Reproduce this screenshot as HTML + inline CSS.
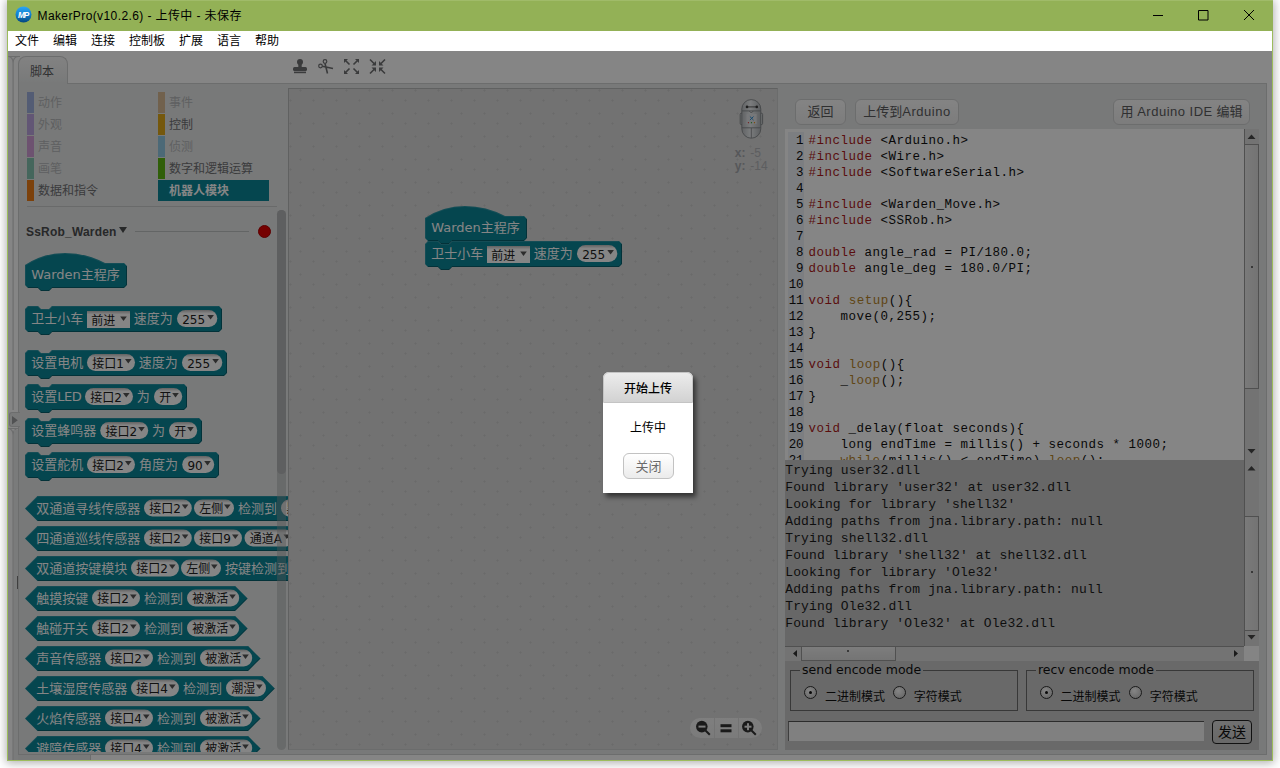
<!DOCTYPE html>
<html lang="zh-CN"><head><meta charset="utf-8"><title>MakerPro</title>
<style>
*{box-sizing:border-box;margin:0;padding:0}
html,body{width:1280px;height:768px;overflow:hidden;background:#fff}
body{position:relative;font-family:"Liberation Sans","Noto Sans CJK SC",sans-serif;font-size:12px;color:#000}
.a{position:absolute}
#win{left:7px;top:0;width:1266px;height:761px;background:#9cbc5c;box-shadow:0 1px 9px 1px rgba(0,0,0,.32)}
#tb{left:0;top:0;width:1266px;height:31px;background:#93b156;box-shadow:inset 0 1px 0 #a0bb69}
#title{left:30.5px;top:8px;font-size:12px;line-height:16px;white-space:nowrap;color:#000;letter-spacing:.4px}
#menu{left:1px;top:31px;width:1264px;height:20px;background:#fff}
#menu span{position:absolute;top:2px;line-height:16px;font-size:12px;white-space:nowrap}
#app{left:1px;top:51px;width:1264px;height:709px;background:#fff;overflow:hidden}
#dim{left:1px;top:51px;width:1264px;height:709px;background:rgba(0,0,0,.48)}
#panel{left:10px;top:32px;width:1249px;height:672px;background:#e6e8e8;border:1px solid #d0d1d2}
#tab{left:10px;top:5px;width:50px;height:28px;background:linear-gradient(#f9f9f9,#e6e8e8);border:1px solid #d0d1d2;border-bottom:0;border-radius:8px 8px 0 0;font-size:12px;line-height:16px;padding:6.500px 0 0 11px;color:#5c5d5f}
.cat{position:absolute;height:21px;font-size:12px;line-height:21px;white-space:nowrap}
.cat i{position:absolute;left:0;top:0;width:7px;height:21px}
.cat b{position:absolute;left:11px;top:1.100px;font-weight:400}
.dis{opacity:.42}
svg text{font-family:"Liberation Sans","Noto Sans CJK SC",sans-serif}
.bk{fill:#0a8698}
.hi{fill:none;stroke:rgba(255,255,255,.13);stroke-width:1}
.lo{fill:none;stroke:rgba(0,0,0,.28);stroke-width:1}
.bl{fill:#fff;font-size:13px;font-weight:400}
.la{font-family:"DejaVu Sans",sans-serif;font-weight:400}
.pl{fill:url(#pg)}
.pt{fill:#222;font-size:12px;font-weight:400}
.pt .la{font-size:12px}
.ar{fill:#555}
.btn{position:absolute;height:26px;border:1px solid #d0d1d2;border-radius:6px;background:linear-gradient(#fdfdfd,#eeeeee);font-size:13px;line-height:24px;text-align:center;color:#5c5d5f;white-space:nowrap}
pre{font-family:"Liberation Mono",monospace}
#code{left:777px;top:78px;width:459px;height:331px;background:#fff;overflow:hidden}
#gut{left:3px;top:3px;width:16px;height:330px;background:#eef1f8}
#ln{left:0;top:3.5px;width:18.2px;text-align:right;font-size:12.5px;line-height:16px;letter-spacing:-.3px;color:#111}
#src{left:23.6px;top:3.5px;font-size:12.5px;letter-spacing:.499px;line-height:16px;color:#111}
.k{color:#ac1a1a}.f{color:#b8862a}
#con{left:777px;top:409px;width:459px;height:186px;background:#c6c6c6;overflow:hidden}
#con pre{position:absolute;left:.2px;top:2.4px;font-size:13px;letter-spacing:.14px;line-height:17px;color:#1c1c1c}
.sb{position:absolute;background:#dcdcdc}
.th{position:absolute;background:linear-gradient(90deg,#ebebeb,#dddddd);border:1px solid #999}
fieldset{position:absolute;border:1px solid #6c6c6c;height:41px}
legend{position:absolute;top:-8.600px;left:9px;background:#cacaca;padding:0 2px;font-family:"DejaVu Sans",sans-serif;font-size:12.5px;line-height:16px;white-space:nowrap;color:#111}
.rd{position:absolute;width:13px;height:13px;border-radius:50%;border:1px solid #333;background:radial-gradient(circle at 40% 35%,#fff,#bbb)}
.rd.on:after{content:"";position:absolute;left:4px;top:4px;width:3px;height:3px;border-radius:50%;background:#111}
.rl{position:absolute;font-size:12px;line-height:14px;white-space:nowrap;color:#111}
</style></head>
<body>
<div id="win" class="a">
<div id="tb" class="a"><svg class="a" style="left:8px;top:6px" width="17" height="17" viewBox="0 0 17 17"><defs><linearGradient id="lg" x1="0" y1="0" x2="0" y2="1"><stop offset="0" stop-color="#2aa6f6"/><stop offset=".5" stop-color="#1281d0"/><stop offset="1" stop-color="#04467e"/></linearGradient></defs><circle cx="8.5" cy="8.5" r="8" fill="url(#lg)"/><text x="8.2" y="11.500" text-anchor="middle" font-size="8.2" font-weight="700" font-style="italic" fill="#fff" style="letter-spacing:-1px">MP</text></svg><div id="title" class="a">MakerPro(v10.2.6) - 上传中 - 未保存</div><svg class="a" style="left:1139px;top:5px" width="120" height="22" viewBox="0 0 120 22"><path d="M7 10.500h10M52.500 5.500h9.500v9.500h-9.500zM98 5l10 10M108 5L98 15" fill="none" stroke="#000" stroke-width="1"/></svg></div>
<div id="menu" class="a"><span style="left:7px">文件</span><span style="left:45px">编辑</span><span style="left:83px">连接</span><span style="left:121px">控制板</span><span style="left:171px">扩展</span><span style="left:209px">语言</span><span style="left:247px">帮助</span></div>
<div id="app" class="a">
<svg class="a" style="left:0;top:0" width="16" height="709" viewBox="0 0 16 709"><g fill="none" stroke="#d0d1d2" stroke-width="1.2"><path d="M.3 5.500H12M.4 5.500Q5 6 5.100 12V359M10 5.500Q5.200 6 5.100 12"/><path d="M.3 377.500H10M.4 377.500Q5 378 5.100 384V709M10 377.500Q5.200 378 5.100 384"/></g></svg><div id="panel" class="a"></div><div class="a" style="left:6px;top:704px;width:77px;height:5px;background:#e6e8e8;border-right:1px solid #d0d1d2"></div><div class="a" style="left:6px;top:379px;width:4px;height:330px;background:#eaecec"></div><div class="a" style="left:9px;top:525px;width:1px;height:13px;background:#7a7a7a"></div><div id="tab" class="a">脚本</div><div class="a" style="left:1px;top:361px;width:11px;height:15px;border:1px solid #d0d1d2;border-right:0;border-radius:3px 0 0 3px;background:#e6e8e8"></div><svg class="a" style="left:4px;top:364.800px" width="6" height="9"><path d="M0 0l5.800 4.200l-5.800 4.200z" fill="#9c9d9f"/></svg><svg class="a" style="left:284px;top:7px" width="96" height="17" viewBox="0 0 96 17"><g fill="#707173"><circle cx="8" cy="4" r="3"/><rect x="6.3" y="4" width="3.4" height="6"/><rect x="1" y="9" width="14" height="4" rx="1.5"/><rect x="2" y="13.6" width="12" height="1.6"/></g><g fill="none" stroke="#707173" stroke-width="1.2"><circle cx="33" cy="3.5" r="1.8"/><circle cx="28.5" cy="8" r="1.8"/><path d="M33 5.5L35.5 15.5M30.3 8.2L41 10.5" stroke-width="1.6"/></g><g stroke="#707173" stroke-width="1.6" fill="#707173"><path d="M53 2l4.5 4.5M66 2l-4.5 4.5M53 15l4.5-4.5M66 15l-4.5-4.5" fill="none"/><path d="M52 1h4l-4 4zM67 1h-4l4 4zM52 16h4l-4-4zM67 16h-4l4-4z" stroke="none"/></g><g stroke="#707173" stroke-width="1.6" fill="#707173"><path d="M78 1.5l4.5 4.5M93 1.5l-4.5 4.5M78 15.5l4.5-4.5M93 15.5l-4.5-4.5" fill="none"/><path d="M84 7.500h-4.500l4.500-4.500zM87 7.500h4.500l-4.500-4.500zM84 9.500h-4.500l4.500 4.500zM87 9.500h4.500l-4.500 4.500z" stroke="none"/></g></svg><div class="cat" style="left:19px;top:41px"><i style="background:#4a6cd4;opacity:.45"></i><b style="color:#b6b8ba">动作</b></div><div class="cat" style="left:19px;top:63px"><i style="background:#8a55d7;opacity:.45"></i><b style="color:#b6b8ba">外观</b></div><div class="cat" style="left:19px;top:85px"><i style="background:#bb42c3;opacity:.45"></i><b style="color:#b6b8ba">声音</b></div><div class="cat" style="left:19px;top:107px"><i style="background:#0e9a6c;opacity:.45"></i><b style="color:#b6b8ba">画笔</b></div><div class="cat" style="left:19px;top:129px"><i style="background:#ee7d16"></i><b style="color:#707174">数据和指令</b></div><div class="cat" style="left:150px;top:41px"><i style="background:#c88330;opacity:.45"></i><b style="color:#b6b8ba">事件</b></div><div class="cat" style="left:150px;top:63px"><i style="background:#e1a91a"></i><b style="color:#707174">控制</b></div><div class="cat" style="left:150px;top:85px"><i style="background:#2ca5e2;opacity:.45"></i><b style="color:#b6b8ba">侦测</b></div><div class="cat" style="left:150px;top:107px"><i style="background:#5cb712"></i><b style="color:#707174">数字和逻辑运算</b></div><div class="cat" style="left:150px;top:129px;width:111px;background:#0a8698"><b style="color:#fff;font-weight:700">机器人模块</b></div><div class="a" style="left:19px;top:155px;width:250px;height:1px;background:#c9cbcb"></div><div class="a" style="left:18px;top:172px;font-size:12px;letter-spacing:.2px;font-weight:700;line-height:18px;color:#4c4d4f;white-space:nowrap">SsRob_Warden</div><svg class="a" style="left:111px;top:176px" width="8" height="6"><path d="M0 0h8l-4 6z" fill="#4c4d4f"/></svg><div class="a" style="left:127px;top:180px;width:114px;height:1px;background:#bfc1c1"></div><div class="a" style="left:250px;top:173.5px;width:13px;height:13px;border-radius:50%;background:#e00000;border:1px solid #b00000"></div><svg class="a" style="left:10px;top:158px" width="270" height="543" viewBox="18 209 270 543"><defs><linearGradient id="pg" x1="0" y1="0" x2="0" y2="1"><stop offset="0" stop-color="#bdbdbd"/><stop offset=".2" stop-color="#fff"/></linearGradient></defs><g transform="translate(25 253)"><path class="bk" d="M0 12Q18.2 0 40 0Q61.2 0.2 80 10L99 10L102 13L102 32L99 35L27 35L24 38L16 38L13 35L3 35L0 32Z"/><path class="hi" d="M.5 32L.5 12.3Q18.300 .5 40 .5Q61 .7 79.800 10.500L98.8 10.500"/><path class="lo" d="M101.5 13.200L101.5 31.8L98.8 34.5L27.2 34.5L24.2 37.5L15.8 37.5L12.8 34.5L3.2 34.5"/><text class="bl" x="6.2" y="26.4"><tspan class="la">Warden</tspan>主程序</text></g><g transform="translate(25 306)"><path class="bk" d="M0 3L3 0L13 0L16 3L24 3L27 0L194 0L197 3L197 23L194 26L27 26L24 29L16 29L13 26L3 26L0 23Z"/><path class="hi" d="M.5 23L.5 3.2L3.2 .5L12.8 .5L15.8 3.5L24.2 3.5L27.2 .5L193.8 .5"/><path class="lo" d="M196.5 3.2L196.5 22.8L193.8 25.5L27.2 25.5L24.2 28.5L15.8 28.5L12.8 25.5L3.2 25.5"/><text class="bl" x="6.2" y="17.1">卫士小车</text><rect class="pl" x="62" y="5" width="43" height="17"/><text class="pt" x="66.2" y="18.9">前进</text><path class="ar" d="M95.19999999999999 10.6h6.6l-3.3 4.4z"/><text class="bl" x="108.8" y="17.1">速度为</text><rect class="pl" x="152" y="4" width="40.3" height="17" rx="8.5"/><text class="pt" x="157.2" y="17.9"><tspan class="la">255</tspan></text><path class="ar" d="M182.3 9h6.6l-3.3 4.4z"/></g><g transform="translate(25 350)"><path class="bk" d="M0 3L3 0L13 0L16 3L24 3L27 0L199 0L202 3L202 23L199 26L27 26L24 29L16 29L13 26L3 26L0 23Z"/><path class="hi" d="M.5 23L.5 3.2L3.2 .5L12.8 .5L15.8 3.5L24.2 3.5L27.2 .5L198.8 .5"/><path class="lo" d="M201.5 3.2L201.5 22.8L198.8 25.5L27.2 25.5L24.2 28.5L15.8 28.5L12.8 25.5L3.2 25.5"/><text class="bl" x="6.2" y="17.1">设置电机</text><rect class="pl" x="62" y="4" width="48" height="17" rx="8.5"/><text class="pt" x="67.2" y="17.9">接口<tspan class="la">1</tspan></text><path class="ar" d="M100.0 9h6.6l-3.3 4.4z"/><text class="bl" x="113.8" y="17.1">速度为</text><rect class="pl" x="157" y="4" width="40.3" height="17" rx="8.5"/><text class="pt" x="162.2" y="17.9"><tspan class="la">255</tspan></text><path class="ar" d="M187.3 9h6.6l-3.3 4.4z"/></g><g transform="translate(25 384)"><path class="bk" d="M0 3L3 0L13 0L16 3L24 3L27 0L159 0L162 3L162 23L159 26L27 26L24 29L16 29L13 26L3 26L0 23Z"/><path class="hi" d="M.5 23L.5 3.2L3.2 .5L12.8 .5L15.8 3.5L24.2 3.5L27.2 .5L158.8 .5"/><path class="lo" d="M161.5 3.2L161.5 22.8L158.8 25.5L27.2 25.5L24.2 28.5L15.8 28.5L12.8 25.5L3.2 25.5"/><text class="bl" x="6.2" y="17.1">设置<tspan class="la" style="letter-spacing:-.5px">LED</tspan></text><rect class="pl" x="60" y="4" width="48" height="17" rx="8.5"/><text class="pt" x="65.2" y="17.9">接口<tspan class="la">2</tspan></text><path class="ar" d="M98.0 9h6.6l-3.3 4.4z"/><text class="bl" x="111.8" y="17.1">为</text><rect class="pl" x="129" y="4" width="28.2" height="17" rx="8.5"/><text class="pt" x="134.2" y="17.9">开</text><path class="ar" d="M147.2 9h6.6l-3.3 4.4z"/></g><g transform="translate(25 418)"><path class="bk" d="M0 3L3 0L13 0L16 3L24 3L27 0L174 0L177 3L177 23L174 26L27 26L24 29L16 29L13 26L3 26L0 23Z"/><path class="hi" d="M.5 23L.5 3.2L3.2 .5L12.8 .5L15.8 3.5L24.2 3.5L27.2 .5L173.8 .5"/><path class="lo" d="M176.5 3.2L176.5 22.8L173.8 25.5L27.2 25.5L24.2 28.5L15.8 28.5L12.8 25.5L3.2 25.5"/><text class="bl" x="6.2" y="17.1">设置蜂鸣器</text><rect class="pl" x="75.2" y="4" width="48" height="17" rx="8.5"/><text class="pt" x="80.4" y="17.9">接口<tspan class="la">2</tspan></text><path class="ar" d="M113.2 9h6.6l-3.3 4.4z"/><text class="bl" x="127.0" y="17.1">为</text><rect class="pl" x="144" y="4" width="28.2" height="17" rx="8.5"/><text class="pt" x="149.2" y="17.9">开</text><path class="ar" d="M162.2 9h6.6l-3.3 4.4z"/></g><g transform="translate(25 452)"><path class="bk" d="M0 3L3 0L13 0L16 3L24 3L27 0L191 0L194 3L194 23L191 26L27 26L24 29L16 29L13 26L3 26L0 23Z"/><path class="hi" d="M.5 23L.5 3.2L3.2 .5L12.8 .5L15.8 3.5L24.2 3.5L27.2 .5L190.8 .5"/><path class="lo" d="M193.5 3.2L193.5 22.8L190.8 25.5L27.2 25.5L24.2 28.5L15.8 28.5L12.8 25.5L3.2 25.5"/><text class="bl" x="6.2" y="17.1">设置舵机</text><rect class="pl" x="62" y="4" width="48" height="17" rx="8.5"/><text class="pt" x="67.2" y="17.9">接口<tspan class="la">2</tspan></text><path class="ar" d="M100.0 9h6.6l-3.3 4.4z"/><text class="bl" x="114.0" y="17.1">角度为</text><rect class="pl" x="157.2" y="4" width="32" height="17" rx="8.5"/><text class="pt" x="162.39999999999998" y="17.9"><tspan class="la">90</tspan></text><path class="ar" d="M179.2 9h6.6l-3.3 4.4z"/></g><g transform="translate(25 496)"><path class="bk" d="M12.5 25L0 12.5L12.5 0L327.5 0L340 12.5L327.5 25Z"/><path class="hi" d="M.7 12.5L12.7 .5L327.3 .5"/><path class="lo" d="M339.3 12.5L327.3 24.5L12.7 24.5"/><text class="bl" x="11.2" y="16.6">双通道寻线传感器</text><rect class="pl" x="119" y="3.5" width="47.8" height="17" rx="8.5"/><text class="pt" x="124.2" y="17.4">接口<tspan class="la">2</tspan></text><path class="ar" d="M156.8 8.5h6.6l-3.3 4.4z"/><rect class="pl" x="169" y="3.5" width="40" height="17" rx="8.5"/><text class="pt" x="174.2" y="17.4">左侧</text><path class="ar" d="M199.0 8.5h6.6l-3.3 4.4z"/><text class="bl" x="213.0" y="16.6">检测到</text><rect class="pl" x="256" y="3.5" width="40" height="17" rx="8.5"/><text class="pt" x="261.2" y="17.4">黑色</text><path class="ar" d="M286.0 8.5h6.6l-3.3 4.4z"/></g><g transform="translate(25 526)"><path class="bk" d="M12.5 25L0 12.5L12.5 0L387.5 0L400 12.5L387.5 25Z"/><path class="hi" d="M.7 12.5L12.7 .5L387.3 .5"/><path class="lo" d="M399.3 12.5L387.3 24.5L12.7 24.5"/><text class="bl" x="11.2" y="16.6">四通道巡线传感器</text><rect class="pl" x="119" y="3.5" width="47.8" height="17" rx="8.5"/><text class="pt" x="124.2" y="17.4">接口<tspan class="la">2</tspan></text><path class="ar" d="M156.8 8.5h6.6l-3.3 4.4z"/><rect class="pl" x="169" y="3.5" width="48" height="17" rx="8.5"/><text class="pt" x="174.2" y="17.4">接口<tspan class="la">9</tspan></text><path class="ar" d="M207.0 8.5h6.6l-3.3 4.4z"/><rect class="pl" x="219.5" y="3.5" width="49" height="17" rx="8.5"/><text class="pt" x="224.7" y="17.4">通道<tspan class="la">A</tspan></text><path class="ar" d="M258.5 8.5h6.6l-3.3 4.4z"/></g><g transform="translate(25 556)"><path class="bk" d="M12.5 25L0 12.5L12.5 0L327.5 0L340 12.5L327.5 25Z"/><path class="hi" d="M.7 12.5L12.7 .5L327.3 .5"/><path class="lo" d="M339.3 12.5L327.3 24.5L12.7 24.5"/><text class="bl" x="11.2" y="16.6">双通道按键模块</text><rect class="pl" x="106" y="3.5" width="48" height="17" rx="8.5"/><text class="pt" x="111.2" y="17.4">接口<tspan class="la">2</tspan></text><path class="ar" d="M144.0 8.5h6.6l-3.3 4.4z"/><rect class="pl" x="156" y="3.5" width="40" height="17" rx="8.5"/><text class="pt" x="161.2" y="17.4">左侧</text><path class="ar" d="M186.0 8.5h6.6l-3.3 4.4z"/><text class="bl" x="200.0" y="16.6">按键检测到</text></g><g transform="translate(25 586)"><path class="bk" d="M12.5 25L0 12.5L12.5 0L210.1 0L222.6 12.5L210.1 25Z"/><path class="hi" d="M.7 12.5L12.7 .5L209.9 .5"/><path class="lo" d="M221.9 12.5L209.9 24.5L12.7 24.5"/><text class="bl" x="11.2" y="16.6">触摸按键</text><rect class="pl" x="67" y="3.5" width="48" height="17" rx="8.5"/><text class="pt" x="72.2" y="17.4">接口<tspan class="la">2</tspan></text><path class="ar" d="M105.0 8.5h6.6l-3.3 4.4z"/><text class="bl" x="119.0" y="16.6">检测到</text><rect class="pl" x="162" y="3.5" width="52.2" height="17" rx="8.5"/><text class="pt" x="167.2" y="17.4">被激活</text><path class="ar" d="M204.2 8.5h6.6l-3.3 4.4z"/></g><g transform="translate(25 616)"><path class="bk" d="M12.5 25L0 12.5L12.5 0L210.1 0L222.6 12.5L210.1 25Z"/><path class="hi" d="M.7 12.5L12.7 .5L209.9 .5"/><path class="lo" d="M221.9 12.5L209.9 24.5L12.7 24.5"/><text class="bl" x="11.2" y="16.6">触碰开关</text><rect class="pl" x="67" y="3.5" width="48" height="17" rx="8.5"/><text class="pt" x="72.2" y="17.4">接口<tspan class="la">2</tspan></text><path class="ar" d="M105.0 8.5h6.6l-3.3 4.4z"/><text class="bl" x="119.0" y="16.6">检测到</text><rect class="pl" x="162" y="3.5" width="52.2" height="17" rx="8.5"/><text class="pt" x="167.2" y="17.4">被激活</text><path class="ar" d="M204.2 8.5h6.6l-3.3 4.4z"/></g><g transform="translate(25 646)"><path class="bk" d="M12.5 25L0 12.5L12.5 0L223.1 0L235.6 12.5L223.1 25Z"/><path class="hi" d="M.7 12.5L12.7 .5L222.9 .5"/><path class="lo" d="M234.9 12.5L222.9 24.5L12.7 24.5"/><text class="bl" x="11.2" y="16.6">声音传感器</text><rect class="pl" x="80" y="3.5" width="48" height="17" rx="8.5"/><text class="pt" x="85.2" y="17.4">接口<tspan class="la">2</tspan></text><path class="ar" d="M118.0 8.5h6.6l-3.3 4.4z"/><text class="bl" x="132.0" y="16.6">检测到</text><rect class="pl" x="175" y="3.5" width="52.2" height="17" rx="8.5"/><text class="pt" x="180.2" y="17.4">被激活</text><path class="ar" d="M217.2 8.5h6.6l-3.3 4.4z"/></g><g transform="translate(25 676)"><path class="bk" d="M12.5 25L0 12.5L12.5 0L237.3 0L249.8 12.5L237.3 25Z"/><path class="hi" d="M.7 12.5L12.7 .5L237.10000000000002 .5"/><path class="lo" d="M249.10000000000002 12.5L237.10000000000002 24.5L12.7 24.5"/><text class="bl" x="11.2" y="16.6">土壤湿度传感器</text><rect class="pl" x="106" y="3.5" width="48" height="17" rx="8.5"/><text class="pt" x="111.2" y="17.4">接口<tspan class="la">4</tspan></text><path class="ar" d="M144.0 8.5h6.6l-3.3 4.4z"/><text class="bl" x="158.0" y="16.6">检测到</text><rect class="pl" x="201" y="3.5" width="40" height="17" rx="8.5"/><text class="pt" x="206.2" y="17.4">潮湿</text><path class="ar" d="M231.0 8.5h6.6l-3.3 4.4z"/></g><g transform="translate(25 706)"><path class="bk" d="M12.5 25L0 12.5L12.5 0L223.1 0L235.6 12.5L223.1 25Z"/><path class="hi" d="M.7 12.5L12.7 .5L222.9 .5"/><path class="lo" d="M234.9 12.5L222.9 24.5L12.7 24.5"/><text class="bl" x="11.2" y="16.6">火焰传感器</text><rect class="pl" x="80" y="3.5" width="48" height="17" rx="8.5"/><text class="pt" x="85.2" y="17.4">接口<tspan class="la">4</tspan></text><path class="ar" d="M118.0 8.5h6.6l-3.3 4.4z"/><text class="bl" x="132.0" y="16.6">检测到</text><rect class="pl" x="175" y="3.5" width="52.2" height="17" rx="8.5"/><text class="pt" x="180.2" y="17.4">被激活</text><path class="ar" d="M217.2 8.5h6.6l-3.3 4.4z"/></g><g transform="translate(25 736)"><path class="bk" d="M12.5 25L0 12.5L12.5 0L223.1 0L235.6 12.5L223.1 25Z"/><path class="hi" d="M.7 12.5L12.7 .5L222.9 .5"/><path class="lo" d="M234.9 12.5L222.9 24.5L12.7 24.5"/><text class="bl" x="11.2" y="16.6">避障传感器</text><rect class="pl" x="80" y="3.5" width="48" height="17" rx="8.5"/><text class="pt" x="85.2" y="17.4">接口<tspan class="la">4</tspan></text><path class="ar" d="M118.0 8.5h6.6l-3.3 4.4z"/><text class="bl" x="132.0" y="16.6">检测到</text><rect class="pl" x="175" y="3.5" width="52.2" height="17" rx="8.5"/><text class="pt" x="180.2" y="17.4">被激活</text><path class="ar" d="M217.2 8.5h6.6l-3.3 4.4z"/></g></svg>
<div class="a" style="left:269px;top:159px;width:9px;height:540px;border-radius:5px;background:rgba(160,163,163,.42)"></div><div class="a" style="left:269px;top:159px;width:9px;height:264px;border-radius:5px;background:#b4b6b8"></div><div class="a" id="cv" style="left:280px;top:37px;width:490px;height:662px;background:#dadada;border:1px solid #cdcfcf;border-top-color:#b9bbbb;border-left-color:#b9bbbb;overflow:hidden"><svg class="a" style="left:-1px;top:-1px" width="490" height="662"><defs><pattern id="dt" width="23" height="23" patternUnits="userSpaceOnUse"><path d="M12 1h1v1h1v1h-1v1h-1v-1h-1v-1h1zM2 11h1v1h1v1h-1v1h-1v-1h-1v-1h1z" fill="#000" fill-opacity=".035"/><path d="M12 2h1v1h-1zM2 12h1v1h-1z" fill="#000" fill-opacity=".03"/></pattern></defs><rect width="490" height="662" fill="url(#dt)"/><g transform="translate(137 118)"><path class="bk" d="M0 12Q18.2 0 40 0Q61.2 0.2 80 10L99 10L102 13L102 32L99 35L27 35L24 38L16 38L13 35L3 35L0 32Z"/><path class="hi" d="M.5 32L.5 12.3Q18.300 .5 40 .5Q61 .7 79.800 10.500L98.8 10.500"/><path class="lo" d="M101.5 13.200L101.5 31.8L98.8 34.5L27.2 34.5L24.2 37.5L15.8 37.5L12.8 34.5L3.2 34.5"/><text class="bl" x="6.2" y="26.4"><tspan class="la">Warden</tspan>主程序</text></g><g transform="translate(137 153)"><path class="bk" d="M0 3L3 0L13 0L16 3L24 3L27 0L194 0L197 3L197 23L194 26L27 26L24 29L16 29L13 26L3 26L0 23Z"/><path class="hi" d="M.5 23L.5 3.2L3.2 .5L12.8 .5L15.8 3.5L24.2 3.5L27.2 .5L193.8 .5"/><path class="lo" d="M196.5 3.2L196.5 22.8L193.8 25.5L27.2 25.5L24.2 28.5L15.8 28.5L12.8 25.5L3.2 25.5"/><text class="bl" x="6.2" y="17.1">卫士小车</text><rect class="pl" x="62" y="5" width="43" height="17"/><text class="pt" x="66.2" y="18.9">前进</text><path class="ar" d="M95.19999999999999 10.6h6.6l-3.3 4.4z"/><text class="bl" x="108.8" y="17.1">速度为</text><rect class="pl" x="152" y="4" width="40.3" height="17" rx="8.5"/><text class="pt" x="157.2" y="17.9"><tspan class="la">255</tspan></text><path class="ar" d="M182.3 9h6.6l-3.3 4.4z"/></g></svg><svg class="a" style="left:450px;top:9.5px" width="26" height="40" viewBox="0 0 26 40"><defs><linearGradient id="rb" x1="0" y1="0" x2="1" y2="0"><stop offset="0" stop-color="#b9bdc1"/><stop offset=".45" stop-color="#eceff1"/><stop offset="1" stop-color="#b2b6ba"/></linearGradient></defs><rect x="1.2" y="14.2" width="2.4" height="11.4" rx="1.2" fill="#d8dcdf" stroke="#74787c" stroke-width=".8"/><rect x="21.2" y="14.2" width="2.4" height="11.4" rx="1.2" fill="#d8dcdf" stroke="#74787c" stroke-width=".8"/><rect x="2.8" y=".6" width="19" height="38.6" rx="9.5" fill="url(#rb)" stroke="#7c8084" stroke-width=".8"/><path d="M3 11.900h18.600M3 28.800h18.600M12.300 29v10M10.300 12l2 2l2-2" stroke="#7c8084" stroke-width=".8" fill="none"/><path d="M8 7.900h9.800" stroke="#3a3a3a" stroke-width=".8"/><circle cx="8" cy="7.900" r="1.300" fill="#3a3a3a"/><circle cx="17.800" cy="7.900" r="1.300" fill="#3a3a3a"/><rect x="7.600" y="15" width="10" height="10" fill="#e4e7ea"/><path d="M10.900 17.500l3.600 3.600M14.500 17.500l-3.600 3.600" stroke="#2f8fd6" stroke-width="1"/><circle cx="9.400" cy="23.700" r=".65" fill="#d33"/><circle cx="12.500" cy="23.700" r=".65" fill="#3a3"/><circle cx="15.500" cy="23.700" r=".65" fill="#e80"/></svg><div class="a" style="left:445.800px;top:58px;font-size:12px;line-height:13px;color:#b2b4b8;white-space:nowrap;word-spacing:1.5px"><b style="color:#a6a8ad">x:</b> -5<br><b style="color:#a6a8ad">y:</b> -14</div><div class="a" style="left:401px;top:629px;width:72px;height:20px;border-radius:10px;background:linear-gradient(#f3f3f3,#ebebeb)"></div><div class="a" style="left:425px;top:629px;width:1px;height:20px;background:#dcdcdc"></div><div class="a" style="left:449px;top:629px;width:1px;height:20px;background:#dcdcdc"></div><svg class="a" style="left:401px;top:629px" width="72" height="20" viewBox="0 0 72 20"><g fill="#333" stroke="#333"><circle cx="11.800" cy="8.600" r="5.800" stroke="none"/><path d="M15.500 12.500l4.300 4.200" stroke-width="2"/><rect x="8.500" y="7.600" width="7" height="2" fill="#efefef" stroke="none"/><rect x="30.500" y="6.200" width="11" height="3" stroke="none"/><rect x="30.500" y="11.300" width="11" height="3" stroke="none"/><circle cx="57.800" cy="8.600" r="5.800" stroke="none"/><path d="M61.500 12.500l4.300 4.200" stroke-width="2"/><rect x="54.500" y="7.700" width="7" height="2" fill="#efefef" stroke="none"/><rect x="57" y="5.200" width="2" height="7" fill="#efefef" stroke="none"/></g></svg></div>
<div class="btn" style="left:787px;top:48px;width:51px">返回</div><div class="btn" style="left:847px;top:48px;width:104px">上传到<span style="letter-spacing:.55px">Arduino</span></div><div class="btn" style="left:1105px;top:48px;width:137px">用 <span style="letter-spacing:.5px">Arduino IDE</span> 编辑</div><div id="code" class="a"><div id="gut" class="a"></div><pre id="ln" class="a">1
2
3
4
5
6
7
8
9
10
11
12
13
14
15
16
17
18
19
20
21</pre><pre id="src" class="a"><span class="k">#include</span> &lt;Arduino.h&gt;
<span class="k">#include</span> &lt;Wire.h&gt;
<span class="k">#include</span> &lt;SoftwareSerial.h&gt;

<span class="k">#include</span> &lt;Warden_Move.h&gt;
<span class="k">#include</span> &lt;SSRob.h&gt;

<span class="k">double</span> angle_rad = PI/180.0;
<span class="k">double</span> angle_deg = 180.0/PI;

<span class="k">void</span> <span class="f">setup</span>(){
    move(0,255);
}

<span class="k">void</span> <span class="f">loop</span>(){
    _<span class="f">loop</span>();
}

<span class="k">void</span> _delay(float seconds){
    long endTime = millis() + seconds * 1000;
    <span class="f">while</span>(millis() &lt; endTime)_<span class="f">loop</span>();</pre></div>
<div class="sb" style="left:1236px;top:78px;width:15px;height:331px;border-left:1px solid #999"></div><div class="th" style="left:1236px;top:93px;width:15px;height:245px"></div><svg class="a" style="left:1236px;top:78px" width="15" height="331"><path d="M3.500 10h8l-4-4.500zM3.500 320h8l-4 4.500z" fill="#484848"/><circle cx="8" cy="138" r="1" fill="#444"/></svg><div id="con" class="a"><pre>Trying user32.dll
Found library 'user32' at user32.dll
Looking for library 'shell32'
Adding paths from jna.library.path: null
Trying shell32.dll
Found library 'shell32' at shell32.dll
Looking for library 'Ole32'
Adding paths from jna.library.path: null
Trying Ole32.dll
Found library 'Ole32' at Ole32.dll</pre></div>
<div class="sb" style="left:1236px;top:409px;width:15px;height:186px;border-left:1px solid #999"></div><div class="th" style="left:1236px;top:465px;width:15px;height:115px"></div><svg class="a" style="left:1236px;top:409px" width="15" height="186"><path d="M3.500 10.500h8l-4-4.500zM3.500 175h8l-4 4.500z" fill="#484848"/><circle cx="8" cy="112" r="1" fill="#444"/></svg><div class="sb" style="left:777px;top:595px;width:459px;height:15px;border-top:1px solid #999"></div><div class="a" style="left:1236px;top:595px;width:15px;height:15px;background:#fdfdfd"></div><div class="th" style="left:793px;top:595px;width:95px;height:15px;background:linear-gradient(#efefef,#e0e0e0)"></div><svg class="a" style="left:777px;top:595px" width="460" height="15"><path d="M12 4v7l-4-3.500zM449 4v7l4-3.500z" fill="#333"/><circle cx="63" cy="5" r="1" fill="#444"/></svg><div class="a" style="left:777px;top:610px;width:474px;height:89px;background:#cacaca"></div><fieldset style="left:782px;top:619px;width:228px"><legend>send encode mode</legend></fieldset><div class="rd on" style="left:795.8px;top:635.0px"></div><div class="rl" style="left:817px;top:638.5px">二进制模式</div><div class="rd" style="left:884.6px;top:635.0px"></div><div class="rl" style="left:905.8px;top:638.5px">字符模式</div><fieldset style="left:1018px;top:619px;width:228px"><legend>recv encode mode</legend></fieldset><div class="rd on" style="left:1031.8px;top:635.0px"></div><div class="rl" style="left:1052.6px;top:638.5px">二进制模式</div><div class="rd" style="left:1121.0px;top:635.0px"></div><div class="rl" style="left:1141.7px;top:638.5px">字符模式</div><div class="a" style="left:780px;top:670px;width:416px;height:20px;background:#f6f6f6;border-top:1px solid #555;border-left:1px solid #777"></div><div class="a" style="left:1204px;top:669px;width:40px;height:24px;border:1px solid #222;border-radius:4px;background:linear-gradient(#d8d8d8,#c8c8c8);font-size:14px;line-height:22px;text-align:center;color:#111">发送</div></div>
<div id="dim" class="a"></div>
<div class="a" style="left:596px;top:372px;width:90px;height:121px;background:#fff;border-radius:6px 6px 0 0;box-shadow:3px 4px 5px rgba(0,0,0,.55)"><div class="a" style="left:0;top:0;width:90px;height:31px;border-radius:6px 6px 0 0;background:linear-gradient(#ececec,#d2d2d2);border-bottom:1px solid #b4b4b4;border:1px solid #c4c4c4;font-size:12px;font-weight:500;line-height:16px;text-align:center;padding-top:8px">开始上传</div><div class="a" style="left:0;top:48.200px;width:90px;text-align:center;font-size:12px;line-height:16px">上传中</div><div class="a" style="left:20px;top:81px;width:51px;height:26px;border:1px solid #c2c2c2;border-radius:6px;background:linear-gradient(#fff,#ebebeb);font-size:13px;line-height:25.4px;text-align:center;color:#6a6a6a">关闭</div></div>
</div>
</body></html>
